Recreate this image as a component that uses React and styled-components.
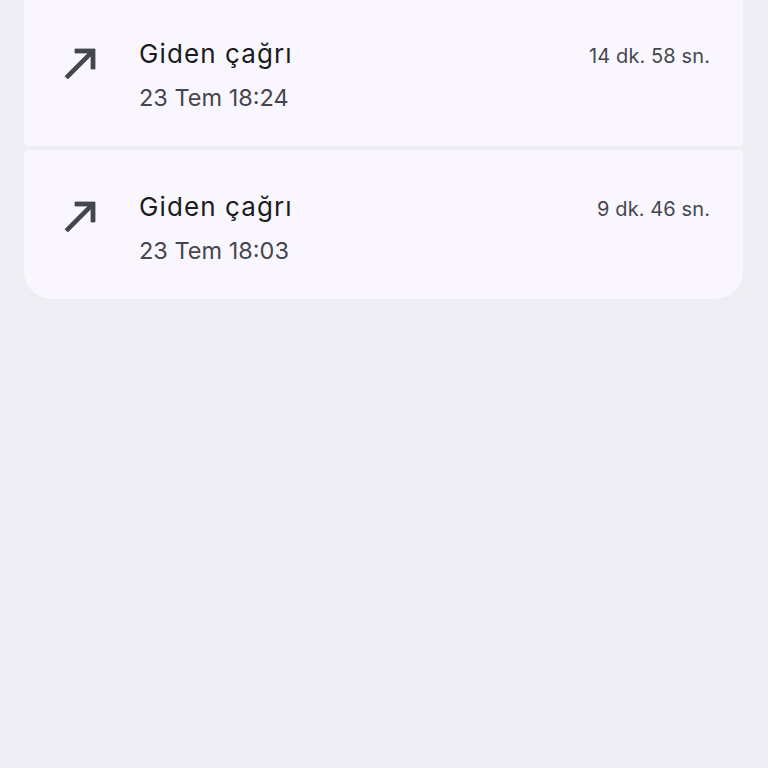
import React from 'react';
import styled, { createGlobalStyle } from 'styled-components';

const GlobalStyle = createGlobalStyle`
  html, body {
    margin: 0;
    padding: 0;
    background: #eeedf3;
  }
  body {
    font-family: Inter, "Noto Sans", Roboto, sans-serif;
    -webkit-font-smoothing: antialiased;
  }
`;

const Page = styled.div`
  min-height: 768px;
  background: #eeedf3;
  overflow: hidden;
`;

const CallList = styled.ul`
  list-style: none;
  margin: -3px 0 0 0;
  padding: 0 25px 0 24px;
  display: flex;
  flex-direction: column;
  gap: 4px;
`;

const CallCard = styled.li`
  display: flex;
  align-items: flex-start;
  height: 149px;
  box-sizing: border-box;
  padding: 40px 33px 0 33px;
  background: #f9f7fd;
  border-radius: ${(p) => (p.$last ? '4px 4px 28px 28px' : '4px')};
`;

const IconWrap = styled.div`
  width: 48px;
  height: 48px;
  margin-top: 2px;
  margin-right: 34px;
  color: #44464f;
  flex-shrink: 0;

  svg {
    display: block;
    width: 48px;
    height: 48px;
  }
`;

const Info = styled.div`
  flex: 1;
  display: flex;
  flex-direction: column;
  gap: 10px;
  padding-top: 1px;
`;

const TopRow = styled.div`
  display: flex;
  justify-content: space-between;
  align-items: baseline;
`;

const Title = styled.span`
  font-size: 26px;
  line-height: 32px;
  color: #1b1b1f;
  letter-spacing: 1.1px;
`;

const Duration = styled.span`
  font-size: 20px;
  line-height: 32px;
  color: #46464f;
  letter-spacing: 0.1px;
`;

const Stamp = styled.span`
  font-size: 23.5px;
  line-height: 32px;
  color: #46464f;
`;

const OutgoingIcon = () => (
  <svg viewBox="0 0 24 24" fill="currentColor" stroke="currentColor" strokeWidth="0.4" aria-hidden="true">
    <path d="M9 5v2h6.59L4 18.59 5.41 20 17 8.41V15h2V5z" />
  </svg>
);

const calls = [
  { id: 1, label: 'Giden çağrı', time: '23 Tem 18:24', duration: '14 dk. 58 sn.' },
  { id: 2, label: 'Giden çağrı', time: '23 Tem 18:03', duration: '9 dk. 46 sn.' },
];

export default function App() {
  return (
    <>
      <GlobalStyle />
      <Page>
        <CallList>
          {calls.map((call, i) => (
            <CallCard key={call.id} $last={i === calls.length - 1}>
              <IconWrap>
                <OutgoingIcon />
              </IconWrap>
              <Info>
                <TopRow>
                  <Title>{call.label}</Title>
                  <Duration>{call.duration}</Duration>
                </TopRow>
                <Stamp>{call.time}</Stamp>
              </Info>
            </CallCard>
          ))}
        </CallList>
      </Page>
    </>
  );
}
